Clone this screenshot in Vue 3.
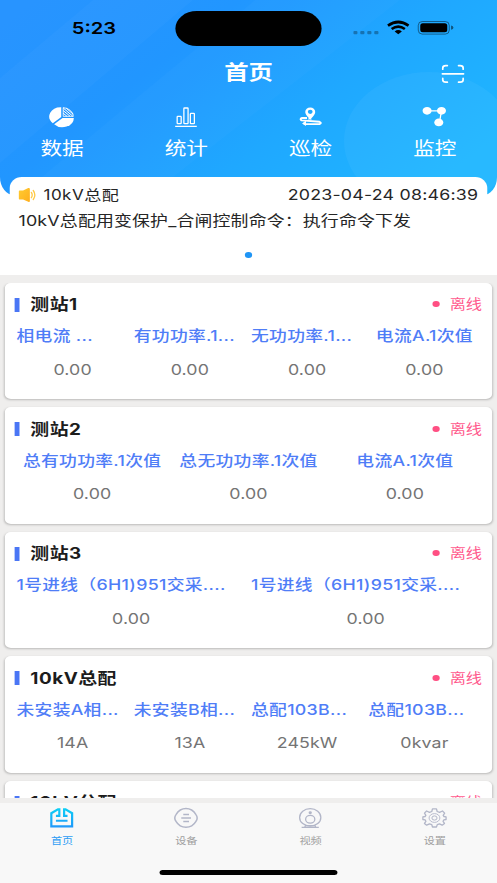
<script setup>
const navs = [
  { key: 'data', label: '数据' },
  { key: 'stat', label: '统计' },
  { key: 'patrol', label: '巡检' },
  { key: 'monitor', label: '监控' },
]

const stations = [
  {
    name: '测站1',
    items: [
      { label: '相电流 ...', value: '0.00', cut: true },
      { label: '有功功率.1...', value: '0.00', cut: true },
      { label: '无功功率.1...', value: '0.00', cut: true },
      { label: '电流A.1次值', value: '0.00' },
    ],
  },
  {
    name: '测站2',
    items: [
      { label: '总有功功率.1次值', value: '0.00' },
      { label: '总无功功率.1次值', value: '0.00' },
      { label: '电流A.1次值', value: '0.00' },
    ],
  },
  {
    name: '测站3',
    items: [
      { label: '1号进线（6H1)951交采....', value: '0.00', cut: true },
      { label: '1号进线（6H1)951交采....', value: '0.00', cut: true },
    ],
  },
  {
    name: '10kV总配',
    items: [
      { label: '未安装A相...', value: '14A', cut: true },
      { label: '未安装B相...', value: '13A', cut: true },
      { label: '总配103B...', value: '245kW', cut: true },
      { label: '总配103B...', value: '0kvar', cut: true },
    ],
  },
  { name: '10kV分配', items: [] },
]

const tabs = [
  { key: 'home', label: '首页' },
  { key: 'device', label: '设备' },
  { key: 'video', label: '视频' },
  { key: 'setting', label: '设置' },
]
</script>

<template>
  <div class="page">
    <header class="header">
      <svg class="backdrop" viewBox="0 0 497 195" preserveAspectRatio="none">
        <defs>
          <linearGradient id="sky" gradientUnits="userSpaceOnUse" x1="60" y1="-20" x2="300" y2="290">
            <stop offset="0" stop-color="#2894ff" />
            <stop offset=".32" stop-color="#2196ff" />
            <stop offset=".65" stop-color="#1fa8ff" />
            <stop offset="1" stop-color="#1fb6ff" />
          </linearGradient>
        </defs>
        <rect width="497" height="195" fill="url(#sky)" />
        <path d="M0 78L93 0H193L0 163Z" fill="#fff" opacity=".025" />
        <path d="M134 100L255 0H400L150 195H20Z" fill="#fff" opacity=".02" />
        <ellipse cx="429" cy="141" rx="85" ry="69" fill="#fff" opacity=".045" />
      </svg>
      <div class="status">
        <div class="time">5:23</div>
        <div class="island"></div>
        <div class="signals">
          <svg class="sig" viewBox="0 0 102 16" preserveAspectRatio="none">
            <g fill="#000" opacity=".3">
              <rect x="0" y="11" width="4.2" height="3.2" rx="1" />
              <rect x="7" y="11" width="4.2" height="3.2" rx="1" />
              <rect x="14" y="11" width="4.2" height="3.2" rx="1" />
              <rect x="21" y="11" width="4.2" height="3.2" rx="1" />
            </g>
            <g fill="none" stroke="#000" stroke-width="2.7">
              <path d="M34.7 5.6Q45 -1.6 55.3 5.6" />
              <path d="M38.4 9Q45 4.4 51.6 9" />
            </g>
            <path d="M41.4 11.4Q45 8.6 48.6 11.4L45 14.2Z" />
            <rect x="65" y="1.5" width="31" height="12.6" rx="4" fill="none" stroke="#000" stroke-opacity=".45" />
            <rect x="67" y="3.3" width="27" height="9" rx="2.5" />
            <path d="M97.8 5.6Q100.2 6 100.2 7.7Q100.2 9.4 97.8 9.8Z" opacity=".5" />
          </svg>
        </div>
      </div>
      <div class="titlebar">
        <div class="title">首页</div>
        <svg class="scan" viewBox="0 0 24 20" preserveAspectRatio="none" fill="none" stroke="#fff" stroke-width="1.7" stroke-linecap="round">
          <path d="M1.8 5.2V4Q1.8 1.6 4.8 1.6H6.4M17.6 1.6H19.2Q22.2 1.6 22.2 4V5.2M22.2 14.4V15.8Q22.2 18.2 19.2 18.2H17.6M6.4 18.2H4.8Q1.8 18.2 1.8 15.8V14.4M1.4 9.8H22.6" />
        </svg>
      </div>
      <nav class="navs">
        <div v-for="n in navs" :key="n.key" class="nav">
          <svg class="navicon" viewBox="0 0 26 22" preserveAspectRatio="none">
            <g v-if="n.key === 'data'">
              <path d="M12.5 1.2V11L4.1 17.2A11.4 9.3 0 0 1 12.5 1.2Z" fill="#fff" />
              <path d="M13.8 11.9H25.1A11.4 9.3 0 0 1 5.4 18.2Z" fill="#fff" />
              <path d="M14.5 1.6V10.4H24.6A11 9 0 0 0 14.5 1.6Z" fill="none" stroke="#fff" stroke-width=".8" />
              <path d="M14.5 2L24 10.2M14.5 4.6L21.3 10.2M14.5 7.3L18.2 10.2M17.5 2.2L24.5 8.2" stroke="#fff" stroke-width="1" />
            </g>
            <g v-else-if="n.key === 'stat'" fill="none" stroke="#fff" stroke-width="1.3">
              <rect x="4.2" y="10.4" width="4" height="7.3" rx=".6" />
              <rect x="10.9" y="2" width="4.2" height="15.7" rx=".6" />
              <rect x="17.4" y="7.4" width="4" height="10.3" rx=".6" />
              <path d="M2.2 20.3H23.8" />
            </g>
            <g v-else-if="n.key === 'patrol'">
              <path fill-rule="evenodd" d="M13 13.4Q8 8.6 8 5.9A5 4.5 0 0 1 18 5.9Q18 8.6 13 13.4ZM13 3.7A2.4 2.1 0 1 0 13 7.9A2.4 2.1 0 1 0 13 3.7Z" fill="#fff" />
              <path d="M9.8 12H4.8Q2.1 13 4.4 14.4L22.3 15.8Q25 17 22.3 18.1H6.6" fill="none" stroke="#fff" stroke-width="1.9" stroke-linejoin="round" />
              <path d="M8.8 14.6L8.8 20.1L4.8 17.6ZM12.6 10.5L14.6 13.5L10.6 13.5Z" fill="#fff" />
            </g>
            <g v-else>
              <path d="M6 4.8H20L18 16.5" fill="none" stroke="#fff" stroke-width="1.3" />
              <ellipse cx="5.6" cy="4.8" rx="4.5" ry="3.9" fill="#fff" />
              <ellipse cx="20" cy="4.8" rx="4.5" ry="3.9" fill="#fff" />
              <ellipse cx="17.3" cy="16.4" rx="4.5" ry="3.9" fill="#fff" />
            </g>
          </svg>
          <span>{{ n.label }}</span>
        </div>
      </nav>
    </header>

    <section class="notice">
      <div class="noticehead">
        <svg class="horn" viewBox="0 0 18 16" preserveAspectRatio="none">
          <defs>
            <linearGradient id="horn" x1="0" x2="1" y1="0" y2="1">
              <stop offset="0" stop-color="#ffcc32" />
              <stop offset="1" stop-color="#ffae1c" />
            </linearGradient>
          </defs>
          <path d="M1.3 3.6H4.8L10 1Q11.6 .6 11.6 2V14Q11.6 15.4 10 14.8L4.8 12.5H1.3Q.5 12.5 .5 11.6V4.4Q.5 3.6 1.3 3.6Z" fill="url(#horn)" />
          <path d="M13.1 5.4Q14.8 8 13.1 10.7M15 3.5Q18.2 8 15 12.5" fill="none" stroke="#ffca45" stroke-width="1.3" stroke-linecap="round" />
        </svg>
        <span class="source">10kV总配</span>
        <span class="date">2023-04-24 08:46:39</span>
      </div>
      <div class="message">10kV总配用变保护_合闸控制命令：执行命令下发</div>
      <div class="pager"></div>
    </section>

    <main class="list">
      <div class="scroll">
        <article v-for="s in stations" :key="s.name" class="card">
          <div class="cardhead">
            <i class="bar"></i>
            <h3>{{ s.name }}</h3>
            <span class="state"><i class="dot"></i>离线</span>
          </div>
          <div class="cells">
            <div v-for="(c, i) in s.items" :key="i" class="cell">
              <div class="label" :class="{ cut: c.cut }">{{ c.label }}</div>
              <div class="value">{{ c.value }}</div>
            </div>
          </div>
        </article>
      </div>
    </main>

    <footer class="tabbar">
      <div class="tabs">
        <div v-for="t in tabs" :key="t.key" class="tab" :class="{ active: t.key === 'home' }">
          <svg class="tabicon" viewBox="0 0 26 22" preserveAspectRatio="none" fill="none" stroke="#b2b6c8" stroke-width="1.3">
            <g v-if="t.key === 'home'" stroke="url(#house)" stroke-width="2">
              <defs>
                <linearGradient id="house" gradientUnits="userSpaceOnUse" x1="0" y1="1" x2="0" y2="21">
                  <stop offset="0" stop-color="#0bd0f5" />
                  <stop offset="1" stop-color="#2196fb" />
                </linearGradient>
              </defs>
              <path d="M7.2 8.8H10.6V2.4H9.2L2.6 6.2V19.4H23.4V6.2L16.8 2.4H15.4V8.8H18.8" stroke-width="2.2" />
              <path d="M7.2 13.8H18.8" />
            </g>
            <g v-else-if="t.key === 'device'">
              <path d="M13 1.6C18 1.6 20.6 3.7 23 7.6Q25.4 11 23 14.3C20.6 18.3 18 20.2 13 20.2S5.4 18.3 3 14.3Q.6 11 3 7.6C5.4 3.7 8 1.6 13 1.6Z" stroke-width="1.5" />
              <path d="M10.3 7.4H16M8.3 10.9H18M10.3 14.4H16" stroke-width="1.5" />
            </g>
            <g v-else-if="t.key === 'video'">
              <ellipse cx="13" cy="10.4" rx="10.6" ry="8.8" />
              <ellipse cx="13" cy="12.2" rx="4.6" ry="3.9" />
              <ellipse cx="13" cy="5.7" rx="1" ry=".8" fill="#b2b6c8" />
              <path d="M8.6 18L7.6 20M17.4 18L18.4 20M4.4 20.3H21.6M8 18.6H18" />
            </g>
            <g v-else>
              <path d="M11 1.8H15L15.7 4.5L18.1 5.4L21 4L23.2 6.1L21.7 8.4L22.5 9.5L24.6 9.8V12.5L22.4 12.9L21.6 14.3L23 16.4L20.7 18.2L18 16.8L15.8 17.6L15 20H11L10.3 17.6L8 16.8L5.2 18.2L3 16.4L4.4 14.3L3.6 12.9L1.4 12.5V9.8L3.6 9.5L4.4 8.4L3 6.1L5.1 4L8 5.4L10.3 4.5Z" stroke-linejoin="round" />
              <ellipse cx="13" cy="11" rx="5.4" ry="4.4" stroke-width=".9" />
              <ellipse cx="13" cy="11" rx="2.6" ry="2.1" stroke-width="1" />
            </g>
          </svg>
          <span>{{ t.label }}</span>
        </div>
      </div>
      <div class="homebar"></div>
    </footer>
  </div>
</template>

<style>
html,
body {
  margin: 0;
  overflow: hidden;
  background: #f8f8f8;
}
</style>

<style scoped>
* {
  box-sizing: border-box;
}
.page {
  --u: 0.820926px;
  width: 408px;
  height: 883px;
  display: flex;
  flex-direction: column;
  overflow: hidden;
  transform: scaleX(1.218137);
  transform-origin: 0 0;
  background: #fff;
  color: #262626;
  font-family: Inter, "Noto Sans CJK SC", sans-serif;
}
.header {
  position: relative;
  height: 195px;
  flex: none;
  overflow: hidden;
  border-radius: 0 0 calc(14 * var(--u)) calc(14 * var(--u)) / 0 0 18px 18px;
  color: #fff;
}
.backdrop {
  position: absolute;
  inset: 0;
  width: 100%;
  height: 100%;
}
.status {
  position: relative;
  height: 56px;
  padding-top: 11px;
  display: grid;
  grid-template-columns: 176fr 145fr 176fr;
}
.time {
  padding-left: calc(12 * var(--u));
  color: #000;
  font-size: 16.5px;
  font-weight: 600;
  line-height: 34px;
  text-align: center;
}
.island {
  height: 34.5px;
  border-radius: 18px;
  background: #000;
}
.signals {
  padding: 9px 0 0 calc(32 * var(--u));
}
.sig {
  display: block;
  width: calc(102 * var(--u));
  height: 16px;
}
.titlebar {
  position: relative;
  height: 32px;
  display: grid;
  grid-template-columns: 1fr auto 1fr;
  align-items: center;
}
.title {
  grid-column: 2;
  padding-top: 1px;
  font-size: 20px;
  font-weight: 700;
  line-height: 32px;
}
.scan {
  justify-self: end;
  width: calc(24 * var(--u));
  height: 20px;
  margin: 3px calc(31.5 * var(--u)) 0 0;
}
.navs {
  position: relative;
  display: grid;
  grid-template-columns: repeat(4, 1fr);
  padding-top: 18px;
}
.nav {
  display: flex;
  flex-direction: column;
  align-items: center;
  font-size: 17.8px;
  line-height: 24px;
}
.navicon {
  width: calc(26 * var(--u));
  height: 22px;
  margin-bottom: 9px;
}
.notice {
  position: relative;
  height: 98px;
  flex: none;
  margin: -18px calc(9.5 * var(--u)) 0;
  padding: 6px calc(9.5 * var(--u)) 0 calc(9 * var(--u));
  border-radius: calc(12 * var(--u)) calc(12 * var(--u)) 0 0 / 11px 11px 0 0;
  background: #fff;
  font-size: 14.7px;
}
.noticehead {
  display: flex;
  align-items: center;
  height: 24px;
}
.horn {
  width: calc(18 * var(--u));
  height: 16px;
  margin-right: calc(7 * var(--u));
}
.source {
  font-size: 14px;
  line-height: 22px;
  letter-spacing: 0.4px;
  margin-top: -1px;
}
.date {
  margin-left: auto;
  margin-right: -0.2px;
  font-size: 14.6px;
  letter-spacing: 0.18px;
}
.message {
  margin-top: 2px;
  line-height: 24px;
  letter-spacing: 0.13px;
  white-space: nowrap;
}
.pager {
  width: calc(7 * var(--u));
  height: 6px;
  margin: 19px auto 0;
  border-radius: 50%;
  background: #1f95f5;
}
.list {
  height: 528px;
  flex: none;
  padding: 7.5px calc(5 * var(--u)) 5.5px;
  background: #efeeed;
}
.scroll {
  height: 515px;
  overflow: hidden;
  margin: 0 calc(-5 * var(--u));
  padding: 0 calc(5 * var(--u));
}
.card {
  height: 116.5px;
  margin-bottom: 8px;
  padding: 10px calc(9 * var(--u)) 0;
  border-radius: 5px;
  background: #fff;
  box-shadow: 0 1px 2px rgba(0, 0, 0, 0.22);
}
.cardhead {
  display: flex;
  align-items: center;
  height: 24px;
}
.bar {
  width: calc(5 * var(--u));
  height: 14px;
  margin-left: calc(0.4 * var(--u));
  background: #4a76f5;
}
h3 {
  margin: 0 0 0 calc(11 * var(--u));
  padding-top: 1px;
  color: #1c1c1c;
  font-size: 15.5px;
  font-weight: 700;
  line-height: 24px;
  letter-spacing: 0.4px;
}
.state {
  display: flex;
  align-items: center;
  margin-top: -1px;
  margin-left: auto;
  margin-right: calc(1 * var(--u));
  color: #ff5a8d;
  font-size: 13.3px;
  line-height: 24px;
}
.dot {
  width: calc(7 * var(--u));
  height: 6px;
  margin-right: calc(10 * var(--u));
  border-radius: 50%;
  background: #ff4f83;
}
.cells {
  display: flex;
  padding-top: 7.5px;
}
.cell {
  flex: 1 1 0;
  min-width: 0;
}
.label {
  color: #4f7df7;
  font-size: 14.6px;
  font-weight: 500;
  line-height: 24px;
  letter-spacing: 0.25px;
  text-align: center;
  white-space: nowrap;
}
.label.cut {
  padding-left: calc(2.5 * var(--u));
  text-align: left;
}
.value {
  margin-top: 9.5px;
  color: #747474;
  font-size: 14.6px;
  line-height: 24px;
  letter-spacing: 0.1px;
  text-align: center;
}
.tabbar {
  flex: 1;
  background: #f8f8f8;
}
.tabs {
  height: 67px;
  display: grid;
  grid-template-columns: repeat(4, 1fr);
  padding-top: 4px;
}
.tab {
  display: flex;
  flex-direction: column;
  align-items: center;
  color: #a0a0a0;
  font-size: 9.2px;
  line-height: 14px;
}
.tab.active {
  color: #2f9df4;
}
.tabicon {
  width: calc(26 * var(--u));
  height: 22px;
  margin-bottom: 5px;
}
.homebar {
  width: calc(177 * var(--u));
  height: 5px;
  margin: 0 auto;
  border-radius: 3px;
  background: #000;
}
</style>
